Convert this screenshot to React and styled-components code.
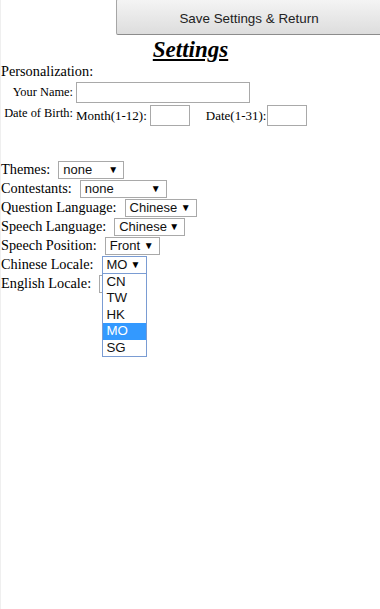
import React from "react";
import styled, { createGlobalStyle } from "styled-components";

const GlobalStyle = createGlobalStyle`
  html, body {
    margin: 0;
    padding: 0;
    background: #ffffff;
  }
  body {
    font-family: "Liberation Serif", "Times New Roman", serif;
    font-size: 14.3px;
    color: #000;
    overflow: hidden;
  }
`;

const Page = styled.div`
  min-height: 100vh;
  border-left: 1px solid #efefef;
  box-sizing: border-box;
`;

const TopBar = styled.div`
  display: flex;
  justify-content: flex-end;
  height: 35px;
  overflow: hidden;
`;

const SaveButton = styled.button`
  width: 266px;
  height: 36px;
  margin-top: -1px;
  margin-right: -2px;
  border: 1px solid #a6a6a6;
  border-bottom-color: #8c8c8c;
  border-radius: 2px;
  background: linear-gradient(#f4f4f4, #dddddd);
  font-family: "Liberation Sans", Arial, sans-serif;
  font-size: 13.4px;
  color: #222;
  padding: 2px 0 0;
`;

const Title = styled.h1`
  margin: 1px 0 0;
  text-align: center;
  font-size: 23px;
  line-height: 27px;
  font-weight: bold;
  font-style: italic;
  text-decoration: underline;
  text-underline-offset: 2px;
`;

const Line = styled.div`
  line-height: 17px;
`;

const PersonalTable = styled.div`
  display: grid;
  grid-template-columns: 72px auto;
  column-gap: 3px;
  row-gap: 2px;
  padding: 2px 0 0;
  font-size: 13px;
`;

const Label = styled.div`
  text-align: right;
  white-space: nowrap;
  font-size: 12.4px;
  align-self: ${(p) => (p.$top ? "start" : "center")};
  padding-top: ${(p) => (p.$top ? "1px" : "0")};
`;

const Cell = styled.div`
  display: flex;
  align-items: center;
  white-space: nowrap;
`;

const TextInput = styled.div`
  width: ${(p) => p.$w}px;
  height: 21px;
  box-sizing: border-box;
  border: 1px solid #a9a9a9;
  background: #fff;
  margin-left: ${(p) => p.$ml || 0}px;
  margin-right: ${(p) => p.$mr || 0}px;
`;

const Options = styled.div`
  margin-top: 34px;
  display: flex;
  flex-direction: column;
`;

const Row = styled.div`
  display: flex;
  align-items: center;
  gap: 8px;
  height: 19px;
  white-space: nowrap;
`;

const SelectWrap = styled.div`
  position: relative;
`;

const Select = styled.div`
  width: ${(p) => p.$w}px;
  height: 18px;
  box-sizing: border-box;
  border: 1px solid ${(p) => (p.$focus ? "#7a9cd3" : "#a9a9a9")};
  background: #fff;
  display: flex;
  align-items: center;
  justify-content: space-between;
  padding: 0 5px 0 4px;
  font-family: "Liberation Sans", Arial, sans-serif;
  font-size: 13px;
  color: #111;
`;

const Arrow = styled.span`
  font-size: 10px;
  line-height: 1;
  color: #000;
`;

const DropList = styled.ul`
  position: absolute;
  top: 17px;
  left: 0;
  z-index: 2;
  width: ${(p) => p.$w}px;
  box-sizing: border-box;
  margin: 0;
  padding: 0;
  list-style: none;
  border: 1px solid #7a9cd3;
  background: #fff;
`;

const DropItem = styled.li`
  height: 16.6px;
  line-height: 16.6px;
  padding-left: 4px;
  font-family: "Liberation Sans", Arial, sans-serif;
  font-size: 13.3px;
  color: ${(p) => (p.$active ? "#fff" : "#111")};
  background: ${(p) => (p.$active ? "#3399ff" : "transparent")};
`;

const FakeSelect = ({ value, w, focus, options, active }) => (
  <SelectWrap>
    <Select $w={w} $focus={focus}>
      <span>{value}</span>
      <Arrow>▼</Arrow>
    </Select>
    {options && (
      <DropList $w={w}>
        {options.map((o) => (
          <DropItem key={o} $active={o === active}>
            {o}
          </DropItem>
        ))}
      </DropList>
    )}
  </SelectWrap>
);

const rows = [
  { label: "Themes:", value: "none", w: 66 },
  { label: "Contestants:", value: "none", w: 87 },
  { label: "Question Language:", value: "Chinese", w: 72 },
  { label: "Speech Language:", value: "Chinese", w: 71 },
  { label: "Speech Position:", value: "Front", w: 55 },
  {
    label: "Chinese Locale:",
    value: "MO",
    w: 45,
    focus: true,
    options: ["CN", "TW", "HK", "MO", "SG"],
  },
  { label: "English Locale:", value: "", w: 45 },
];

export default function App() {
  return (
    <Page>
      <GlobalStyle />
      <TopBar>
        <SaveButton>Save Settings &amp; Return</SaveButton>
      </TopBar>
      <Title>Settings</Title>
      <Line>Personalization:</Line>
      <PersonalTable>
        <Label>Your Name:</Label>
        <Cell>
          <TextInput $w={174} />
        </Cell>
        <Label $top>Date of Birth:</Label>
        <Cell>
          Month(1-12):
          <TextInput $w={40} $ml={3} $mr={16} />
          Date(1-31):
          <TextInput $w={40} $ml={1} />
        </Cell>
      </PersonalTable>
      <Options>
        {rows.map((r) => (
          <Row key={r.label}>
            {r.label}
            <FakeSelect
              value={r.value}
              w={r.w}
              focus={r.focus}
              options={r.options}
              active="MO"
            />
          </Row>
        ))}
      </Options>
    </Page>
  );
}
